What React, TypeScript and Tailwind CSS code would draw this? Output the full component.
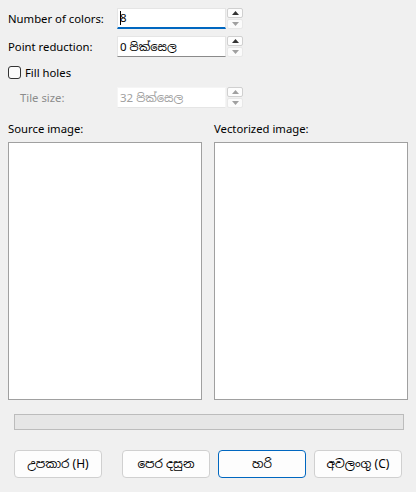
import React from "react";

const font = {
  fontFamily: '"Segoe UI", "Noto Sans", "Noto Sans Sinhala", "Iskoola Pota", sans-serif',
};

function Spin({ value, focused, disabled }: { value: string; focused?: boolean; disabled?: boolean }) {
  return (
    <div className="flex h-[21px] w-[126px] items-stretch">
      <div
        className={
          "flex w-[109px] items-center border bg-white pl-[2px] text-[11.5px] " +
          (focused
            ? "border-[#e5e5e5] border-b-[#0067c0] border-b-2"
            : disabled
            ? "border-[#f5f5f5] border-b-[#e5e5e5]"
            : "border-[#e5e5e5] border-b-[#8a8a8a]") +
          (disabled ? " text-[#a0a0a0]" : " text-black")
        }
      >
        {focused && <span className="mr-[-1px] h-[14px] w-px bg-black"></span>}
        {value}
      </div>
      <div className="ml-[1px] flex w-[16px] flex-col gap-[1px]">
        <div className="flex flex-1 items-center justify-center rounded-[2px] border border-[#d0d0d0] bg-[#fdfdfd]">
          <svg width="7" height="4" viewBox="0 0 7 4">
            <path d="M0 4 L3.5 0 L7 4 Z" fill={disabled ? "#a0a0a0" : "#333"} />
          </svg>
        </div>
        <div className="flex flex-1 items-center justify-center rounded-[2px] border border-[#e8e8e8] bg-[#fbfbfb]">
          <svg width="7" height="4" viewBox="0 0 7 4">
            <path d="M0 0 L3.5 4 L7 0 Z" fill="#a0a0a0" />
          </svg>
        </div>
      </div>
    </div>
  );
}

function Btn({ label, isDefault }: { label: string; isDefault?: boolean }) {
  return (
    <button
      className={
        "h-[28px] w-[88px] rounded-[4px] border bg-[#fdfdfd] text-[12px] text-black " +
        (isDefault ? "border-[#0067c0]" : "border-[#d0d0d0]")
      }
    >
      {label}
    </button>
  );
}

export default function App() {
  return (
    <div className="h-[492px] w-[416px] bg-[#f0f0f0] text-[11.3px] leading-[16px] text-black" style={font}>
      <div className="flex flex-col px-[8px] pt-[8px]">
        <div className="flex h-[21px] items-center">
          <div className="w-[109px]">Number of colors:</div>
          <Spin value="8" focused />
        </div>
        <div className="mt-[7px] flex h-[21px] items-center">
          <div className="w-[109px]">Point reduction:</div>
          <Spin value="0 පික්සෙල" />
        </div>
        <div className="mt-[9px] flex h-[13px] items-center gap-[4px]">
          <div className="h-[13px] w-[13px] rounded-[3px] border border-[#333] bg-[#fbfbfb]"></div>
          <span>Fill holes</span>
        </div>
        <div className="mt-[8px] flex h-[21px] items-center">
          <div className="w-[109px] pl-[12px] text-[#8c8c8c]">Tile size:</div>
          <Spin value="32 පික්සෙල" disabled />
        </div>

        <div className="mt-[13px] grid grid-cols-2 gap-[12px]">
          <div className="flex flex-col">
            <div className="h-[21px]">Source image:</div>
            <div className="h-[258px] border border-[#a0a0a0] bg-white"></div>
          </div>
          <div className="flex flex-col">
            <div className="h-[21px]">Vectorized image:</div>
            <div className="h-[258px] border border-[#a0a0a0] bg-white"></div>
          </div>
        </div>

        <div className="ml-[6px] mr-[4px] mt-[14px] h-[16px] border border-[#bcbcbc] bg-[#e6e6e6]"></div>

        <div className="mt-[20px] flex px-[6px]">
          <Btn label="උපකාර (H)" />
          <div className="ml-[20px] flex gap-[8px]">
            <Btn label="පෙර දසුන" />
            <Btn label="හරි" isDefault />
            <Btn label="අවලංගු (C)" />
          </div>
        </div>
      </div>
    </div>
  );
}
